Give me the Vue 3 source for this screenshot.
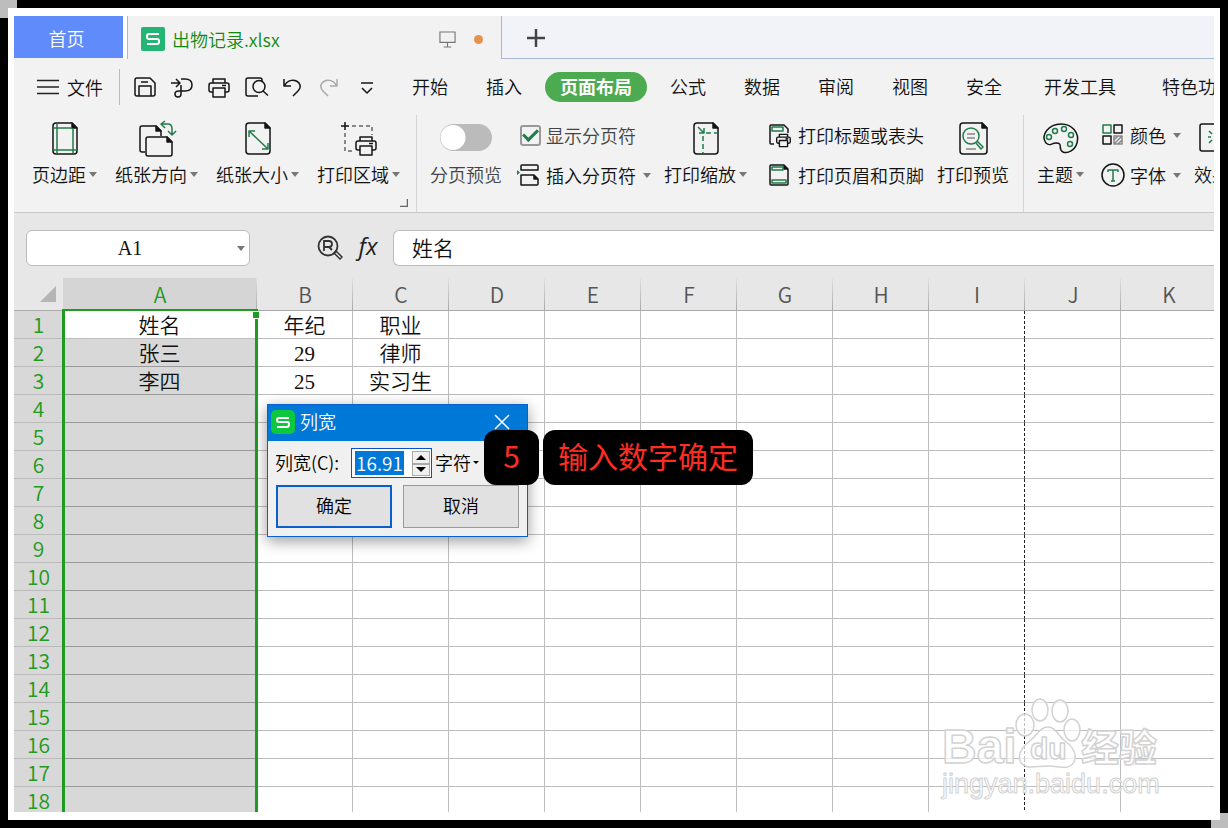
<script setup>
import { ref } from 'vue'

const doc = 'M2 5V30Q2 33 5 33H23Q26 33 26 30V7L21 2H5Q2 2 2 5Z'
const fold = '<path d="M21 2V7H26Z" fill="#151515"/>'
const g = 'stroke="#217c4a"'
const printer = '<path d="M5 6V2H17V6M5 15H3Q1 15 1 13V8Q1 6 3 6H19Q21 6 21 8V13Q21 15 19 15H17M5 11H17V20H5ZM14 8.500H18"/>'

const icons = {
  save: '<path d="M3 1H16L21 6V17Q21 19 19 19H3Q1 19 1 17V3Q1 1 3 1ZM5 19V9H17V19M7 5H14"/>',
  route: '<path d="M0 6H8M5 2L9 6L5 10M10 2H14Q21 2 21 8Q21 14 14 14H8Q4 14 4 17Q4 20 7 20Q10 20 10 17V8"/>',
  print: printer,
  preview: '<path d="M13 19H3Q1 19 1 17V3Q1 1 3 1H15Q17 1 17 3V4"/><circle cx="14" cy="9.500" r="6"/><path d="M18 14L23 18.500"/>',
  undo: '<path d="M2 2V9H9M2.500 9C5 3 13 1 17 6C19 9 18 12 16 14L11 19"/>',
  redo: '<path d="M18 2V9H11M17.500 9C15 3 7 1 3 6C1 9 2 12 4 14L9 19" stroke="#aaa"/>',
  more: '<path d="M5 6H17M6 11L11 16L16 11"/>',
  margins: `<path d="${doc}"/>${fold}<path d="M6 3V32M22 7V32M3 7H21M3 29H26" ${g}/>`,
  orient: `<path d="M7 31H4Q2 31 2 29V7Q2 5 4 5H18L23 10V15"/><path d="M18 5V10H23Z" fill="#151515"/><path d="M8 18Q8 16 10 16H29L34 21V33Q34 35 32 35H10Q8 35 8 33Z"/><path d="M29 16V21H34Z" fill="#151515"/><path d="M27 0L23 3L27 7M23 3H30Q34 3 34 8V13M30 10L34 14L38 10" ${g}/>`,
  size: `<path d="${doc}"/>${fold}<path d="M5 10L24 28M5 16V10H11M18 28H24V22" ${g}/>`,
  area: `<path d="M0 5H8M4 1V9"/><path d="M11 5H31V14M4 12V30H12" stroke="#666" stroke-dasharray="4 3"/><g transform="translate(14 14)">${printer}</g>`,
  insert: `<path d="M4 6V2Q4 1 5 1H20Q21 1 21 2V6ZM4 21V11H17L21 15V20Q21 21 20 21Z"/><path d="M17 11V15H21" fill="#151515"/><path d="M0 6L3 8.500L0 11Z" fill="#217c4a" stroke="none"/>`,
  scale: `<path d="${doc}"/>${fold}<path d="M6 6L12 12M7 12H12V7" ${g}/><path d="M14 12H26M11 15V32" ${g} stroke-dasharray="5 3"/>`,
  titles: `<path d="M5 20H2Q1 20 1 19V2Q1 1 2 1H15L19 5V9"/><path d="M3 3H14V7H3Z" ${g}/><g transform="translate(7 9) scale(.68)" stroke-width="2">${printer}</g>`,
  header: `<path d="M2 1H15L19 5V20Q19 21 18 21H2Q1 21 1 20V2Q1 1 2 1Z"/><path d="M15 1V5H19" fill="#151515"/><path d="M3 3H14V6H3ZM3 16H17V19H3Z" ${g}/>`,
  zoom: `<path d="M2 5V30Q2 33 5 33H26Q29 33 29 30V7L24 2H5Q2 2 2 5Z"/><path d="M24 2V7H29Z" fill="#151515"/><circle cx="13" cy="15" r="8" ${g}/><path d="M19 20L25 26L23 28L18 22" ${g}/><path d="M9 13H17M9 17H17M8 28H18" stroke="#888"/>`,
  theme: `<path d="M4 22C-2 14 7 3 19 3C30 3 38 12 35 22C33 29 26 33 21 31C15 28 22 22 14 22C9 22 8 26 4 22Z"/><g ${g}><circle cx="7" cy="16" r="2.500"/><circle cx="13" cy="10" r="2.500"/><circle cx="22" cy="8" r="2.500"/><circle cx="29" cy="14" r="2.500"/><circle cx="28" cy="23" r="2.500"/></g>`,
  color: `<path d="M2 1H10V9H2Z" ${g}/><path d="M13 1H21V9H13ZM2 12H10V20H2Z"/><path d="M13 12H21V20H13ZM13 16L17 12M13 20L21 12M17 20L21 16" stroke="#888"/>`,
  font: `<circle cx="12" cy="11" r="11"/><path d="M7 8V6H17V8M12 6V17M10 17H14" ${g}/>`,
  effect: `<path d="M28 3H4Q2 3 2 5V28Q2 30 4 30H28"/><path d="M11 10L14 13M10 16H13M11 22L14 19" ${g}/>`,
}

const quick = [
  ['save', '保存'], ['route', '输出'], ['print', '打印'], ['preview', '打印预览'],
  ['undo', '撤销'], ['redo', '恢复'], ['more', '更多'],
]
const tabs = ['开始', '插入', '页面布局', '公式', '数据', '审阅', '视图', '安全', '开发工具', '特色功能']
const pageTools = [
  ['margins', '页边距', 28], ['orient', '纸张方向', 38], ['size', '纸张大小', 28], ['area', '打印区域', 36],
]
const columns = ['A', 'B', 'C', 'D', 'E', 'F', 'G', 'H', 'I', 'J', 'K']
const data = [['姓名', '年纪', '职业'], ['张三', '29', '律师'], ['李四', '25', '实习生']]

const showBreaks = ref(true)
const breakPreview = ref(false)
const cellName = ref('A1')
const formula = ref('姓名')
const width = ref('16.91')
</script>

<template>
  <div class="frame">
    <div class="mat">
      <main class="app">
        <nav class="filebar">
          <button class="home">首页</button>
          <div class="file">
            <svg class="logo" viewBox="0 0 24 24"><rect width="24" height="24" rx="2" fill="#22b573" /><path d="M18 7H8Q6 7 6 9V10Q6 12 8 12H16Q18 12 18 14V15Q18 17 16 17H6" fill="none" stroke="#fff" stroke-width="2" /></svg>
            <span class="filename">出物记录.xlsx</span>
            <svg class="screen" viewBox="0 0 18 18"><path d="M1 1H17V12H1ZM9 12V17M5 17H13" fill="none" stroke="#777" stroke-width="1.200" /></svg>
            <i class="dot"></i>
          </div>
          <div class="rest">
            <button class="add" aria-label="新建"><svg viewBox="0 0 18 18"><path d="M9 0V18M0 9H18" stroke="#444" stroke-width="2.500" /></svg></button>
          </div>
        </nav>

        <nav class="menu">
          <button class="filemenu">
            <svg viewBox="0 0 22 16"><path d="M0 1.500H22M0 8H22M0 14.500H22" stroke="#222" stroke-width="1.500" /></svg>文件
          </button>
          <div class="quick">
            <button v-for="[k, t] in quick" :key="k" :aria-label="t"><svg class="ico" viewBox="0 0 22 21" v-html="icons[k]"></svg></button>
          </div>
          <div class="tabs">
            <button v-for="t in tabs" :key="t" :class="{ on: t === '页面布局', wide: t.length > 3 && t !== '页面布局' }">{{ t }}</button>
          </div>
        </nav>

        <section class="ribbon">
          <div class="group page">
            <button v-for="[k, t, w] in pageTools" :key="k" class="big">
              <svg class="ico" :width="w" height="36" :viewBox="`0 0 ${w} 36`" v-html="icons[k]"></svg>
              <span>{{ t }}<i class="caret"></i></span>
            </button>
            <svg class="launch" viewBox="0 0 8 8"><path d="M7.500 0V7.500H0" fill="none" stroke="#666" stroke-width="1.500" /></svg>
          </div>
          <div class="group breaks">
            <label class="big dim">
              <span class="switchbox"><input v-model="breakPreview" class="switch" type="checkbox" /></span>
              <span>分页预览</span>
            </label>
            <div class="stack">
              <label class="small dim check"><input v-model="showBreaks" type="checkbox" />显示分页符</label>
              <button class="small"><svg class="ico" width="22" height="22" viewBox="0 0 22 22" v-html="icons.insert"></svg>插入分页符<i class="caret"></i></button>
            </div>
            <button class="big">
              <svg class="ico" width="28" height="36" viewBox="0 0 28 36" v-html="icons.scale"></svg>
              <span>打印缩放<i class="caret"></i></span>
            </button>
            <div class="stack titles">
              <button class="small"><svg class="ico" width="22" height="22" viewBox="0 0 22 22" v-html="icons.titles"></svg>打印标题或表头</button>
              <button class="small"><svg class="ico" width="22" height="22" viewBox="0 0 22 22" v-html="icons.header"></svg>打印页眉和页脚</button>
            </div>
            <button class="big">
              <svg class="ico" width="30" height="36" viewBox="0 0 30 36" v-html="icons.zoom"></svg>
              <span>打印预览</span>
            </button>
          </div>
          <div class="group themes">
            <button class="big">
              <svg class="ico" width="38" height="36" viewBox="0 0 38 36" v-html="icons.theme"></svg>
              <span>主题<i class="caret"></i></span>
            </button>
            <div class="stack">
              <button class="small"><svg class="ico" width="22" height="22" viewBox="0 0 22 22" v-html="icons.color"></svg>颜色<i class="caret"></i></button>
              <button class="small"><svg class="ico" width="22" height="22" viewBox="0 0 22 22" v-html="icons.font"></svg>字体<i class="caret"></i></button>
            </div>
            <button class="big">
              <svg class="ico" width="28" height="36" viewBox="0 0 28 36" v-html="icons.effect"></svg>
              <span>效果</span>
            </button>
          </div>
        </section>

        <section class="fbar">
          <div class="namebox"><input v-model="cellName" aria-label="名称框" /><i class="caret"></i></div>
          <svg class="find" viewBox="0 0 26 26"><g fill="none" stroke="#333" stroke-width="1.800"><circle cx="11" cy="11" r="9.500" /><path d="M7 16V6H12Q15 6 15 9Q15 12 12 12H7M12 12L15 15" /><path d="M17 18L19 16L25 22L23 24Z" stroke-width="1.500" /></g></svg>
          <span class="fx">fx</span>
          <input v-model="formula" class="formula" aria-label="编辑栏" />
        </section>

        <section class="sheet">
          <table>
            <colgroup><col class="cn" /><col class="ca" /><col v-for="c in 10" :key="c" class="cx" /></colgroup>
            <thead>
              <tr><th class="corner"><svg viewBox="0 0 16 16"><path d="M16 0V16H0Z" fill="#b5b5b5" /></svg></th><th v-for="c in columns" :key="c" :class="{ sel: c === 'A' }">{{ c }}</th></tr>
            </thead>
            <tbody>
              <tr v-for="r in 18" :key="r">
                <th>{{ r }}</th>
                <td v-for="(c, i) in columns" :key="c" :class="{ sel: i === 0 && r > 1, brk: c === 'I' }">{{ data[r - 1]?.[i] }}</td>
              </tr>
            </tbody>
          </table>
          <div class="selection"><i></i></div>
        </section>

        <svg class="mark" viewBox="0 0 224 106">
          <g fill="#fff" fill-opacity=".7" stroke="#d2d2d2" stroke-width="1.500" stroke-linejoin="round" font-family="Liberation Sans, sans-serif">
            <text x="3" y="67" font-size="48" font-weight="bold">Bai</text>
            <ellipse cx="101" cy="14" rx="8" ry="11" /><ellipse cx="121" cy="15" rx="8" ry="11" />
            <ellipse cx="86" cy="29" rx="9" ry="11" /><ellipse cx="133" cy="34" rx="8" ry="11" />
            <path d="M109 31C116 31 118 38 125 44C133 50 139 57 135 66C130 75 120 70 109 70C98 70 88 74 82 67C77 58 84 50 92 44C99 38 101 31 109 31Z" />
            <text x="91" y="63" font-size="30" font-weight="bold">du</text>
            <text x="142" y="65" font-size="38" font-weight="bold" font-family="Noto Sans CJK SC, sans-serif">经验</text>
            <text x="3" y="97" font-size="27" stroke-width="1">jingyan.baidu.com</text>
          </g>
        </svg>

        <form class="dialog" @submit.prevent>
          <header>
            <svg class="logo" viewBox="0 0 24 24"><rect width="24" height="24" rx="5" fill="#0dc83c" /><path d="M18 8H8Q6 8 6 10Q6 12 8 12H16Q18 12 18 14Q18 17 16 17H6" fill="none" stroke="#fff" stroke-width="2" /></svg>
            <span>列宽</span>
            <button class="close" type="button" aria-label="关闭"><svg viewBox="0 0 16 16"><path d="M1 1L15 15M15 1L1 15" stroke="#fff" stroke-width="1.500" /></svg></button>
          </header>
          <div class="line">
            <label for="colw">列宽(C):</label>
            <div class="spin">
              <input id="colw" v-model="width" />
              <div class="steps">
                <button type="button" aria-label="增加"><svg viewBox="0 0 10 5"><path d="M0 5L5 0L10 5Z" /></svg></button>
                <button type="button" aria-label="减少"><svg viewBox="0 0 10 5"><path d="M0 0L5 5L10 0Z" /></svg></button>
              </div>
            </div>
            <button class="unit" type="button">字符<i></i></button>
          </div>
          <div class="actions"><button class="ok">确定</button><button type="button">取消</button></div>
        </form>
        <div class="callout"><b>5</b><b>输入数字确定</b></div>
      </main>
    </div>
  </div>
</template>

<style>
body { margin: 0; }
</style>

<style scoped>
* { box-sizing: border-box; }
button, input { font: inherit; color: inherit; border: 0; margin: 0; padding: 0; background: none; }
button { white-space: nowrap; flex: none; }
svg { display: block; flex: none; }
.ico { fill: none; stroke: #151515; stroke-width: 1.5px; stroke-linejoin: round; overflow: visible; }
.frame {
  height: 100vh; padding: 8px; overflow: hidden;
  background: linear-gradient(#bdbdbd, #bdbdbd) 0 0 / 17px 18px no-repeat, linear-gradient(#bdbdbd, #bdbdbd) 100% 100% / 17px 15px no-repeat, #000;
}
.mat { height: 100%; padding: 8px 6px; background: #fff; }
.app {
  position: relative; height: 100%; overflow: hidden; display: flex; flex-direction: column;
  background: #f2f2f2; color: #111; font: 350 18px/24px "Noto Sans CJK SC", sans-serif;
}
.caret { display: inline-block; flex: none; border: 4px solid transparent; border-top: 5px solid #777; border-bottom: 0; }

.filebar { display: flex; height: 43px; flex: none; }
.home { width: 109px; height: 42px; background: #5f8bfb; color: #fff; padding: 2px 4px 0 0; }
.file { width: 379px; border-left: 4px solid #fff; display: flex; align-items: center; padding: 3px 19px 0 14px; position: relative; }
.file::before { content: ""; position: absolute; left: 0; top: 0; bottom: 0; border-left: 1px solid #a9b8d0; }
.logo { width: 24px; height: 24px; }
.filename { color: #128a12; margin-left: 7px; }
.screen { width: 17px; height: 17px; margin-left: auto; }
.dot { width: 9px; height: 9px; border-radius: 50%; background: #e5934b; margin-left: 18px; }
.rest { flex: 1; background: #f1f3f8; border: solid #a9b8d0; border-width: 0 0 1px 1px; margin-left: -1px; }
.add { padding: 13px 25px; }
.add svg { width: 18px; height: 18px; }

.menu { display: flex; align-items: center; height: 56px; flex: none; overflow: hidden; }
.filemenu { display: flex; align-items: center; gap: 8px; padding: 0 15px 0 23px; border-right: 1px solid #bbb; height: 36px; width: 106px; }
.filemenu svg { width: 22px; height: 16px; }
.quick { display: flex; gap: 15px; padding-left: 14px; }
.quick svg { width: 22px; height: 21px; }
.tabs { display: flex; gap: 8px; margin-left: 19px; }
.tabs button { padding: 0 15px 2px; height: 30px; border-radius: 15px; }
.tabs .wide { padding: 0 19px 2px; }
.tabs .on { background: #4caa50; color: #fff; font-weight: 700; }

.ribbon { display: flex; height: 98px; flex: none; overflow: hidden; border-bottom: 1px solid #c9c9c9; padding-left: 18px; }
.group { display: flex; flex: none; align-items: flex-start; padding-top: 6px; }
.big { display: flex; flex-direction: column; align-items: center; gap: 5px; }
.big > span:last-child { display: flex; align-items: center; gap: 3px; }
.group + .group { border-left: 1px solid #d5d5d5; }
.page { gap: 18px; width: 384px; position: relative; }
.launch { position: absolute; width: 8px; height: 8px; right: 8px; bottom: 5px; }
.dim { color: #444; }
.breaks { padding-left: 13px; width: 607px; }
.switchbox { height: 36px; padding-top: 3px; }
.switch { appearance: none; display: block; width: 52px; height: 27px; border-radius: 14px; background: radial-gradient(circle at 13px 50%, #fff 12px, #bbb 13px); }
.stack { display: flex; flex-direction: column; gap: 16px; margin-left: 15px; padding-top: 2px; }
.small { display: flex; align-items: center; gap: 7px; height: 24px; white-space: nowrap; }
.check { gap: 5px; padding-left: 3px; }
.check input { appearance: none; width: 21px; height: 21px; border: 2px solid #999; border-radius: 3px; display: grid; place-items: center; }
.check input:checked::after { content: ""; width: 12px; height: 6px; border: solid #217c4a; border-width: 0 0 3px 3px; transform: rotate(-45deg); margin-bottom: 4px; }
.breaks .stack + .big { margin-left: 13px; }
.breaks .titles { margin-left: 22px; }
.themes { padding-left: 13px; }
.themes .stack { margin-left: 17px; }
.themes .stack + .big { margin-left: 13px; }

.fbar { display: flex; align-items: center; height: 65px; flex: none; padding: 5px 0 0 12px; background: #e7e7e7; }
.namebox { width: 224px; height: 36px; display: flex; align-items: center; background: #fff; border: 1px solid #bbb; border-radius: 6px; padding-right: 4px; font: 20px "Liberation Serif", serif; }
.namebox input { flex: 1; min-width: 0; text-align: center; padding-right: 4px; }
.find { width: 26px; height: 26px; margin-left: 67px; }
.fx { width: 50px; padding-bottom: 5px; text-align: center; font: italic 24px "Open Sans", sans-serif; color: #222; }
.formula { flex: 1; min-width: 0; height: 36px; background: #fff; border: 1px solid #bbb; border-right: 0; border-radius: 6px 0 0 6px; padding: 0 0 2px 18px; font-size: 21px; }

.sheet { position: relative; flex: 1; min-height: 0; background: #fff; overflow: hidden; }
table { table-layout: fixed; border-collapse: separate; border-spacing: 0; width: 1203px; }
.cn { width: 49px; } .ca { width: 194px; } .cx { width: 96px; }
th, td { padding: 0; text-align: center; white-space: nowrap; }
th { font: 350 21px/27px "Noto Sans CJK SC", sans-serif; }
thead th { height: 33px; background: #e7e7e7 linear-gradient(#e0e0e0, #aaa) 100% 0 / 1px 100% no-repeat; border-bottom: 1px solid #aaa; color: #555; }
thead .sel { background-color: #d5d5d5; color: #219a21; }
thead .corner { background: #e7e7e7; }
.corner svg { width: 16px; height: 16px; margin: 0 0 0 26px; }
tbody th { height: 28px; background: #d8d8d8; color: #219a21; border-bottom: 1px solid #bbb; }
td { height: 28px; padding-top: 4px; line-height: 23px; font-size: 21px; font-family: "Liberation Serif", "Noto Sans CJK SC", serif; border: solid #bdbdbd; border-width: 0 1px 1px 0; }
td.sel { background: #d8d8d8; border-bottom-color: #999; }
td.brk { border-right: 1px dashed #222; }
.selection { position: absolute; left: 48px; top: 31px; bottom: -9px; width: 196px; border: 3px solid #219a21; border-top-width: 2px; }
.selection i { position: absolute; right: -5px; top: 0; width: 8px; height: 8px; background: #219a21; border: 1px solid #fff; }

.mark { position: absolute; width: 224px; height: 106px; right: 51px; bottom: 10px; }

.dialog { position: absolute; left: 253px; top: 388px; width: 261px; background: #f0f0f0; border: 1px solid #0a5fcf; box-shadow: 0 4px 14px #0006; color: #000; }
.dialog header { display: flex; align-items: center; height: 36px; padding: 0 17px 2px 3px; gap: 5px; background: #0078d7; color: #fff; }
.dialog header span { padding-bottom: 2px; }
.close { margin-left: auto; }
.close svg { width: 16px; height: 16px; }
.line { display: flex; align-items: center; padding: 7px 7px; }
.line label { width: 76px; padding-bottom: 2px; }
.spin { display: flex; width: 81px; height: 30px; padding: 2px 1px 1px 3px; background: #fff; border: 1px solid #0a50c8; justify-content: space-between; }
.spin input { width: 49px; height: 24px; background: #0078d7; color: #fff; font-size: 19px; text-align: center; }
.steps { display: flex; flex-direction: column; width: 18px; }
.steps button { flex: 1; border: 1px solid #aaa; background: #f0f0f0; padding-left: 3px; }
.steps svg { width: 10px; height: 5px; }
.unit { margin-left: 3px; padding-bottom: 2px; display: flex; align-items: center; gap: 2px; }
.unit i { border: 3px solid transparent; border-top-color: #000; border-bottom: 0; }
.actions { display: grid; grid-template-columns: 1fr 1fr; gap: 11px; padding: 0 8px 8px; }
.actions button { height: 43px; background: #e1e1e1; border: 1px solid #999; padding-bottom: 3px; }
.actions .ok { border: 2px solid #0a5fcf; }

.callout { position: absolute; left: 470px; top: 414px; display: flex; gap: 4px; }
.callout b { height: 55px; min-width: 55px; padding: 0 15px; border-radius: 12px; background: #000; color: #ff2c22; text-align: center; font-size: 30px; line-height: 50px; font-weight: 400; white-space: nowrap; }
</style>
